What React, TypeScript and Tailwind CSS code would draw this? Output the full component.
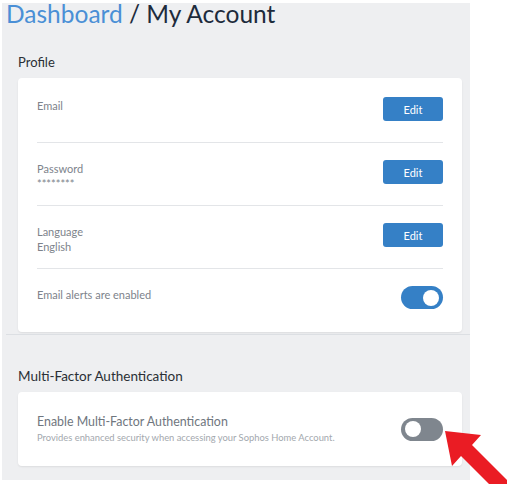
import React from "react";

const font = { fontFamily: "Lato, 'Noto Sans', sans-serif" };

function EditButton() {
  return (
    <button className="w-[60px] h-[24px] rounded-[3px] bg-[#3580c6] text-white text-[11px] leading-none">
      Edit
    </button>
  );
}

function Toggle({ on }: { on: boolean }) {
  return (
    <div
      className={`w-[42px] h-[23px] rounded-full flex items-center px-[4px] ${
        on ? "bg-[#3580c6] justify-end" : "bg-[#7f868e] justify-start"
      }`}
    >
      <div className="w-[16px] h-[16px] rounded-full bg-white" />
    </div>
  );
}

function Row({
  label,
  value,
  action,
  last,
}: {
  label: string;
  value?: string;
  action: React.ReactNode;
  last?: boolean;
}) {
  return (
    <div
      className={`flex justify-between items-start pt-[17px] h-[63px] ${
        last ? "" : "border-b border-[#e3e5e8]"
      }`}
    >
      <div className="flex flex-col text-[#7d838b] text-[11px] leading-[15px] pt-[1px]">
        <span>{label}</span>
        {value && <span>{value}</span>}
      </div>
      {action}
    </div>
  );
}

export default function App() {
  const rows = [
    { label: "Email", action: <EditButton /> },
    { label: "Password", value: "********", action: <EditButton /> },
    { label: "Language", value: "English", action: <EditButton /> },
    { label: "Email alerts are enabled", action: <Toggle on /> },
  ];

  return (
    <div className="relative w-[507px] h-[484px] bg-white overflow-hidden" style={font}>
      <div className="ml-[2px] mt-[3px] w-[468px] h-[477px] bg-[#eeeff1] flex flex-col">
        <h1 className="-mt-[3px] ml-[4px] text-[24.5px] leading-[28px] text-[#1d2b3c] whitespace-nowrap">
          <span className="text-[#4a8fd6]">Dashboard</span> / My Account
        </h1>

        <h2 className="mt-[26px] ml-[16px] text-[13px] leading-[16px] text-[#2a2f35]">Profile</h2>

        <div className="mt-[8px] ml-[16px] w-[444px] h-[254px] bg-white rounded-[4px] shadow-[0_1px_2px_rgba(0,0,0,0.08)] px-[19px] pt-[2px]">
          {rows.map((r, i) => (
            <Row key={r.label} {...r} last={i === rows.length - 1} />
          ))}
        </div>

        <div className="mt-[2px] ml-[4px] border-b border-[#dcdfe3]" />

        <h2 className="mt-[33px] ml-[16px] text-[13.5px] leading-[16px] text-[#2a2f35]">
          Multi-Factor Authentication
        </h2>

        <div className="mt-[8px] ml-[16px] w-[444px] h-[74px] bg-white rounded-[4px] shadow-[0_1px_2px_rgba(0,0,0,0.08)] px-[19px] flex items-center justify-between">
          <div className="flex flex-col">
            <span className="text-[12.4px] leading-[16px] text-[#6f767e]">
              Enable Multi-Factor Authentication
            </span>
            <span className="text-[9.4px] leading-[14px] text-[#a3a8ae] mt-[1px]">
              Provides enhanced security when accessing your Sophos Home Account.
            </span>
          </div>
          <Toggle on={false} />
        </div>
      </div>

      <svg className="absolute left-0 top-0 pointer-events-none" width="507" height="484" viewBox="0 0 507 484">
        <polygon
          points="445,431 481,435 472,445 517,490 506,501 461,456 452,466"
          fill="#ea1c24"
        />
      </svg>
    </div>
  );
}
